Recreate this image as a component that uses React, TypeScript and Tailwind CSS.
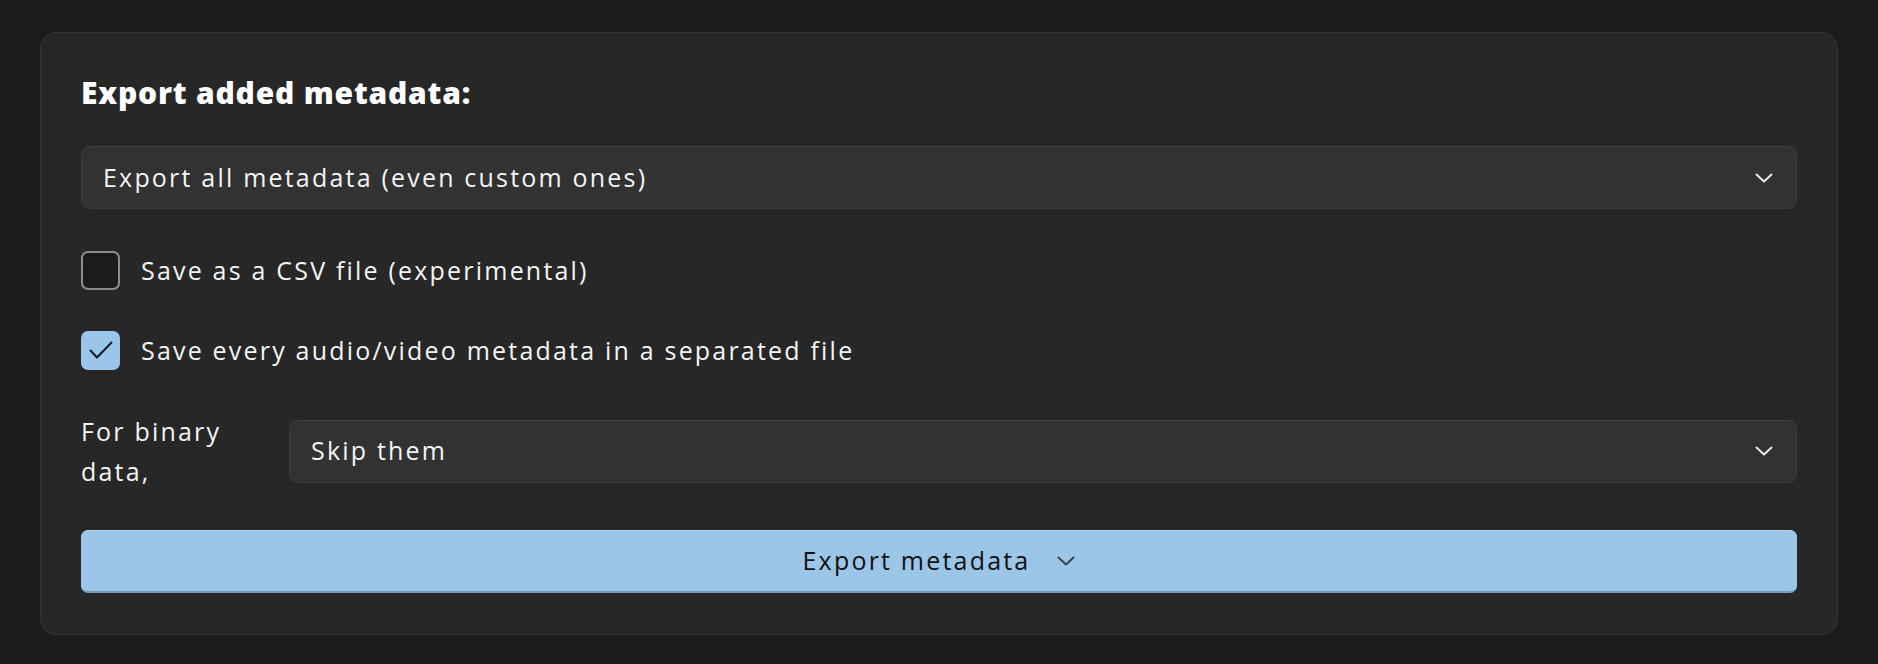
const FONT = "font-['Open_Sans',_'Noto_Sans',_sans-serif]";

function Chevron({ className }: { className?: string }) {
  return (
    <svg width="18" height="10" viewBox="0 0 18 10" fill="none" className={className}>
      <path d="M1.5 1.5 9 8.5 16.5 1.5" stroke="currentColor" strokeWidth="2" strokeLinecap="round" strokeLinejoin="round" />
    </svg>
  );
}

function Select({ value }: { value: string }) {
  return (
    <div className="flex h-[63px] w-full items-center justify-between rounded-[9px] border border-[#3a3a3a] border-t-[#414141] bg-[#323232] pl-[21px] pr-[23px]">
      <span className="text-[25px] tracking-[2.2px] text-[#f4f4f4]">{value}</span>
      <Chevron className="text-[#ececec]" />
    </div>
  );
}

function Checkbox({ checked, label }: { checked: boolean; label: string }) {
  return (
    <label className="flex h-10 items-center gap-[21px]">
      {checked ? (
        <span className="flex h-[39px] w-[39px] items-center justify-center rounded-[7px] bg-[#9bc6e9]">
          <svg width="26" height="20" viewBox="0 0 26 20" fill="none">
            <path d="M2.5 10.5 9 17.5 23.5 2.5" stroke="#111827" strokeWidth="2" strokeLinecap="round" strokeLinejoin="round" />
          </svg>
        </span>
      ) : (
        <span className="h-[39px] w-[39px] rounded-[7px] border-2 border-[#8b8b8b] bg-[#1b1b1b]" />
      )}
      <span className="text-[25px] leading-10 tracking-[2.2px] text-[#f4f4f4]">{label}</span>
    </label>
  );
}

export default function App() {
  return (
    <div className={`min-h-[664px] bg-[#1b1b1b] px-10 pb-[29px] pt-8 ${FONT}`}>
      <div className="flex flex-col rounded-[16px] border border-[#343434] bg-[#272727] px-10 pb-[41px] pt-10">
        <h2 className="text-[30px] font-extrabold leading-10 tracking-[0.8px] text-white">Export added metadata:</h2>

        <div className="mt-[33px]">
          <Select value="Export all metadata (even custom ones)" />
        </div>

        <div className="mt-[41px] flex flex-col gap-10">
          <Checkbox checked={false} label="Save as a CSV file (experimental)" />
          <Checkbox checked={true} label="Save every audio/video metadata in a separated file" />
        </div>

        <div className="mt-[41px] flex items-center gap-[28px]">
          <span className="w-[180px] shrink-0 text-[25px] leading-10 tracking-[2.2px] text-[#f4f4f4]">For binary data,</span>
          <Select value="Skip them" />
        </div>

        <button className="mt-[39px] flex h-[63px] w-full items-center justify-center gap-[27px] rounded-[7px] border-b-2 border-t border-b-[#7b9db9] border-t-[#b3d6f2] bg-[#9bc6e8] text-[25px] tracking-[2.2px] text-[#111]">
          <span>Export metadata</span>
          <Chevron className="text-[#3a4450]" />
        </button>
      </div>
    </div>
  );
}
